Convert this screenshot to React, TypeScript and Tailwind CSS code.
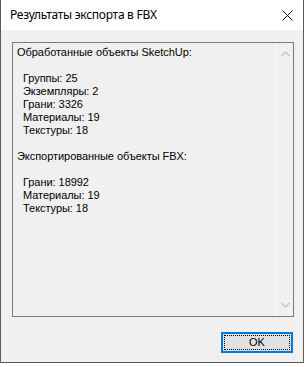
import React from "react";

const lines1 = ["Группы: 25", "Экземпляры: 2", "Грани: 3326", "Материалы: 19", "Текстуры: 18"];
const lines2 = ["Грани: 18992", "Материалы: 19", "Текстуры: 18"];

export default function App() {
  return (
    <div className="w-[305px] h-[367px] bg-white" style={{ fontFamily: '"Liberation Sans", Arial, sans-serif' }}>
      <div className="w-[304px] h-[363px] border-x border-b border-[#5a5a5a] flex flex-col">
        <div className="h-[30px] bg-white flex items-center justify-between pl-[9px] pr-[9px]">
          <span className="text-[12px] tracking-[-0.28px] text-black" style={{ fontFamily: '"Noto Sans", sans-serif' }}>
            Результаты экспорта в FBX
          </span>
          <svg width="11" height="11" viewBox="0 0 11 11" className="mr-[1px]">
            <path d="M0.5 0.5 L10.5 10.5 M10.5 0.5 L0.5 10.5" stroke="#111" strokeWidth="1" />
          </svg>
        </div>
        <div className="flex-1 bg-[#f0f0f0] flex flex-col pt-[12px] pl-[11px] pr-[9px]">
          <div className="w-[282px] h-[275px] border border-[#7a7a7a] flex">
            <div className="flex-1 pl-[4px] pt-[3px] text-[11px] leading-[13px] tracking-[-0.05px] text-black whitespace-pre">
              <div>Обработанные объекты SketchUp:</div>
              <div>&nbsp;</div>
              {lines1.map((l) => (
                <div key={l}>{"  " + l}</div>
              ))}
              <div>&nbsp;</div>
              <div>Экспортированные объекты FBX:</div>
              <div>&nbsp;</div>
              {lines2.map((l) => (
                <div key={l}>{"  " + l}</div>
              ))}
            </div>
            <div className="w-[17px] border-l border-[#fbfbfb] flex flex-col justify-between items-center py-[8px]">
              <svg width="9" height="6" viewBox="0 0 9 6">
                <path d="M0.5 5 L4.5 1 L8.5 5" stroke="#bfbfbf" strokeWidth="1.2" fill="none" />
              </svg>
              <svg width="9" height="6" viewBox="0 0 9 6">
                <path d="M0.5 1 L4.5 5 L8.5 1" stroke="#bfbfbf" strokeWidth="1.2" fill="none" />
              </svg>
            </div>
          </div>
          <div className="flex justify-end mt-[15px] pr-[1px]">
            <button className="w-[72px] h-[21px] border-2 border-[#0078d7] bg-[#e1e1e1] p-[1px] flex">
              <div className="flex-1 border border-dotted border-black flex items-center justify-center text-[11px] text-black">
                OK
              </div>
            </button>
          </div>
        </div>
      </div>
    </div>
  );
}
